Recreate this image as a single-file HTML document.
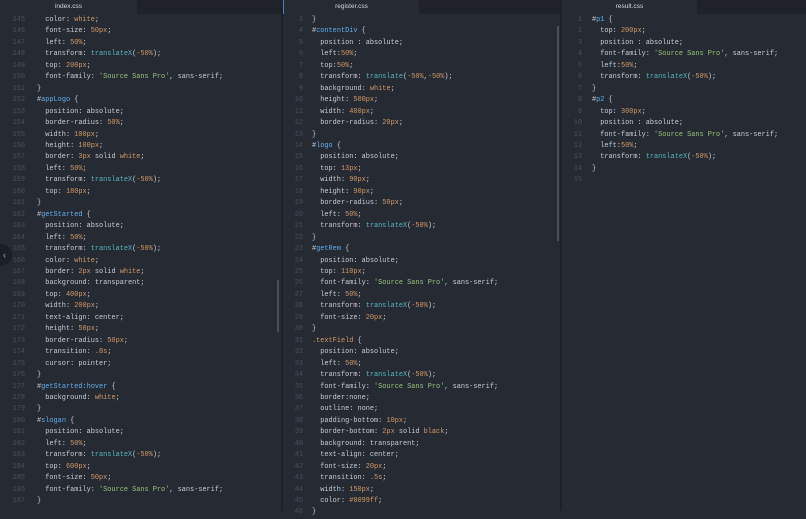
<!DOCTYPE html>
<html><head><meta charset="utf-8"><style>
*{margin:0;padding:0;box-sizing:border-box}
body{width:806px;height:511px;background:#262a33;overflow:hidden;position:relative;font-family:"Liberation Mono",monospace;font-size:6.9px;color:#c8ccd4}
.tabbar{position:absolute;top:0;height:14px;background:#1f2229}
.tab{position:absolute;top:0;height:14px;background:#262a33;color:#d6d9de;font-family:"Liberation Sans",sans-serif;font-size:6.5px;text-align:center;line-height:14px}
.div{position:absolute;top:0;bottom:0;width:2px;background:#1d2026}
.code{position:absolute;top:15px;line-height:11.45px;white-space:pre}
.num{position:absolute;top:15px;line-height:11.45px;white-space:pre;text-align:right;color:#4a505c;width:20px}
.s{color:#61afef}.v{color:#d19a66}.g{color:#98c379}.f{color:#56b6c2}.o{color:#8a909a}
.sb{position:absolute;width:2px;background:#4a4f58}
</style></head><body>
<div class="tabbar" style="left:0;width:806px"></div>
<div class="tab" style="left:0;width:137px">index.css</div>
<div class="tab" style="left:283px;width:136px;border-left:1px solid #4a7fc0">register.css</div>
<div class="tab" style="left:562px;width:135px">result.css</div>
<div class="div" style="left:281px"></div>
<div class="div" style="left:560px"></div>
<div class="sb" style="left:277px;top:280px;height:52px"></div>
<div class="sb" style="left:557px;top:26px;height:215px"></div>
<div style="position:absolute;left:-10px;top:244px;width:22px;height:22px;border-radius:11px;background:#1c1f25;color:#aaa;font-family:'Liberation Sans',sans-serif;font-size:9px;line-height:22px;text-align:right;padding-right:6px">&lsaquo;</div>

<div class="num" style="left:5px">145
146
147
148
149
150
151
152
153
154
155
156
157
158
159
160
161
162
163
164
165
166
167
168
169
170
171
172
173
174
175
176
177
178
179
180
181
182
183
184
185
186
187</div>
<div class="code" style="left:37px">  color: <span class="v">white</span>;
  font-size: <span class="v">50px</span>;
  left: <span class="v">50%</span>;
  transform: <span class="f">translateX</span>(<span class="v">-50%</span>);
  top: <span class="v">200px</span>;
  font-family: <span class="g">'Source Sans Pro'</span>, sans-serif;
}
#<span class="s">appLogo</span> {
  position: absolute;
  border-radius: <span class="v">50%</span>;
  width: <span class="v">100px</span>;
  height: <span class="v">100px</span>;
  border: <span class="v">3px</span> solid <span class="v">white</span>;
  left: <span class="v">50%</span>;
  transform: <span class="f">translateX</span>(<span class="v">-50%</span>);
  top: <span class="v">180px</span>;
}
#<span class="s">getStarted</span> {
  position: absolute;
  left: <span class="v">50%</span>;
  transform: <span class="f">translateX</span>(<span class="v">-50%</span>);
  color: <span class="v">white</span>;
  border: <span class="v">2px</span> solid <span class="v">white</span>;
  background: transparent;
  top: <span class="v">400px</span>;
  width: <span class="v">200px</span>;
  text-align: center;
  height: <span class="v">50px</span>;
  border-radius: <span class="v">50px</span>;
  transition: <span class="v">.8s</span>;
  cursor: pointer;
}
#<span class="s">getStarted:hover</span> {
  background: <span class="v">white</span>;
}
#<span class="s">slogan</span> {
  position: absolute;
  left: <span class="v">50%</span>;
  transform: <span class="f">translateX</span>(<span class="v">-50%</span>);
  top: <span class="v">600px</span>;
  font-size: <span class="v">50px</span>;
  font-family: <span class="g">'Source Sans Pro'</span>, sans-serif;
}</div>

<div class="num" style="left:283px">3
4
5
6
7
8
9
10
11
12
13
14
15
16
17
18
19
20
21
22
23
24
25
26
27
28
29
30
31
32
33
34
35
36
37
38
39
40
41
42
43
44
45
46</div>
<div class="code" style="left:312px">}
#<span class="s">contentDiv</span> {
  position : absolute;
  left:<span class="v">50%</span>;
  top:<span class="v">50%</span>;
  transform: <span class="f">translate</span>(<span class="v">-50%</span>,<span class="v">-50%</span>);
  background: <span class="v">white</span>;
  height: <span class="v">500px</span>;
  width: <span class="v">400px</span>;
  border-radius: <span class="v">20px</span>;
}
#<span class="s">logo</span> {
  position: absolute;
  top: <span class="v">13px</span>;
  width: <span class="v">90px</span>;
  height: <span class="v">90px</span>;
  border-radius: <span class="v">50px</span>;
  left: <span class="v">50%</span>;
  transform: <span class="f">translateX</span>(<span class="v">-50%</span>);
}
#<span class="s">getRem</span> {
  position: absolute;
  top: <span class="v">110px</span>;
  font-family: <span class="g">'Source Sans Pro'</span>, sans-serif;
  left: <span class="v">50%</span>;
  transform: <span class="f">translateX</span>(<span class="v">-50%</span>);
  font-size: <span class="v">20px</span>;
}
<span class="v">.textField</span> {
  position: absolute;
  left: <span class="v">50%</span>;
  transform: <span class="f">translateX</span>(<span class="v">-50%</span>);
  font-family: <span class="g">'Source Sans Pro'</span>, sans-serif;
  border:none;
  outline: none;
  padding-bottom: <span class="v">10px</span>;
  border-bottom: <span class="v">2px</span> solid <span class="v">black</span>;
  background: transparent;
  text-align: center;
  font-size: <span class="v">20px</span>;
  transition: <span class="v">.5s</span>;
  width: <span class="v">150px</span>;
  color: <span class="v">#0099ff</span>;
}</div>

<div class="num" style="left:562px">1
2
3
4
5
6
7
8
9
10
11
12
13
14
15</div>
<div class="code" style="left:592px">#<span class="s">p1</span> {
  top: <span class="v">200px</span>;
  position : absolute;
  font-family: <span class="g">'Source Sans Pro'</span>, sans-serif;
  left:<span class="v">50%</span>;
  transform: <span class="f">translateX</span>(<span class="v">-50%</span>);
}
#<span class="s">p2</span> {
  top: <span class="v">300px</span>;
  position : absolute;
  font-family: <span class="g">'Source Sans Pro'</span>, sans-serif;
  left:<span class="v">50%</span>;
  transform: <span class="f">translateX</span>(<span class="v">-50%</span>);
}
</div>
</body></html>
